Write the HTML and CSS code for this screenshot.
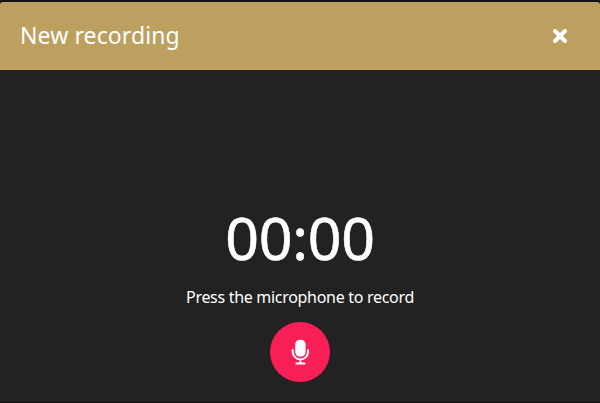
FILE: index.html
```
<!DOCTYPE html>
<html lang="en">
<head>
<meta charset="utf-8">
<title>New recording</title>
<link rel="stylesheet" href="styles.css">
</head>
<body>
<section class="dialog">
  <header class="header">
    <h1 class="title">New recording</h1>
    <button class="close" aria-label="Close">
      <svg width="16" height="16" viewBox="0 0 16 16"><path d="M3 3L13 13M13 3L3 13"/></svg>
    </button>
  </header>
  <main class="content">
    <div class="timer">00:00</div>
    <p class="hint">Press the microphone to record</p>
    <button class="record" aria-label="Record">
      <svg width="18" height="26" viewBox="0 0 18 26">
        <rect x="4.2" y="0.7" width="10.4" height="17" rx="4.8" fill="#fff"/>
        <path d="M1.7 11V12.7A7.7 7.7 0 0 0 17.1 12.7V11M9.4 20.5V24.5M5.4 24.5H13.6" fill="none" stroke="#fff" stroke-width="2" stroke-linecap="round"/>
      </svg>
    </button>
  </main>
</section>
</body>
</html>
```

FILE: styles.css
```
* { box-sizing: border-box; }
body {
  margin: 0;
  height: 403px;
  padding: 2px 0 1px;
  background: #161313;
  color: #fff;
  font-family: "Noto Sans", sans-serif;
  overflow: hidden;
}
.dialog {
  height: 400px;
  display: flex;
  flex-direction: column;
  background: #222;
  border-radius: 3px 3px 0 0;
  overflow: hidden;
}
.header {
  height: 68px;
  flex: none;
  display: flex;
  align-items: center;
  justify-content: space-between;
  padding: 0 32px 0 20px;
  background: #bda060;
}
.title {
  margin: 0;
  padding-bottom: 2px;
  font-size: 23px;
  font-weight: 400;
  line-height: 66px;
  letter-spacing: 0.1px;
}
button {
  border: 0;
  padding: 0;
  color: #fff;
  display: flex;
  align-items: center;
  justify-content: center;
}
.close { background: none; }
.close path { stroke: #fff; stroke-width: 4; stroke-linecap: round; }
.content {
  flex: 1;
  display: flex;
  flex-direction: column;
  align-items: center;
  justify-content: flex-end;
  padding-bottom: 20px;
}
.timer {
  font-size: 59px;
  line-height: 80px;
  letter-spacing: -0.3px;
  -webkit-text-stroke: 0.6px #fff;
}
.hint {
  margin: 8px 0 13px;
  font-size: 16px;
  line-height: 24px;
  letter-spacing: -0.3px;
  white-space: nowrap;
}
.record {
  width: 60px;
  height: 60px;
  border-radius: 50%;
  background: #f81f57;
}
```
